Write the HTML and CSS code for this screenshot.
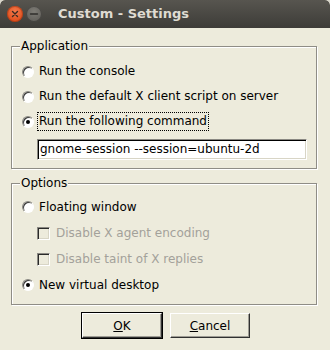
FILE: index.html
```html
<!DOCTYPE html>
<html lang="en">
<head>
  <meta charset="UTF-8" />
  <title>Custom - Settings</title>
  <link rel="stylesheet" href="styles.css">
</head>
<body>
  <div class="titlebar">
    <span class="wbtn close">
      <svg width="16" height="16" viewBox="0 0 16 16"><path d="M5.5 5.5 L10.5 10.5 M10.5 5.5 L5.5 10.5" stroke="#3a2a22" stroke-width="1.4" stroke-linecap="round"/></svg>
    </span>
    <span class="wbtn minimize">
      <svg width="16" height="16" viewBox="0 0 16 16"><path d="M4.5 8 L11.5 8" stroke="#2f2e2b" stroke-width="1.4" stroke-linecap="round"/></svg>
    </span>
    <span class="title">Custom - Settings</span>
  </div>

  <div class="content">
    <fieldset class="group app">
      <legend>Application</legend>
      <div class="row"><span class="radio"></span><span class="label">Run the console</span></div>
      <div class="row"><span class="radio"></span><span class="label">Run the default X client script on server</span></div>
      <div class="row"><span class="radio checked"></span><span class="label focus">Run the following command</span></div>
      <div class="entry">gnome-session --session=ubuntu-2d</div>
    </fieldset>

    <fieldset class="group options">
      <legend>Options</legend>
      <div class="row"><span class="radio"></span><span class="label">Floating window</span></div>
      <div class="row sub"><span class="check"></span><span class="label disabled">Disable X agent encoding</span></div>
      <div class="row sub"><span class="check"></span><span class="label disabled">Disable taint of X replies</span></div>
      <div class="row"><span class="radio checked"></span><span class="label">New virtual desktop</span></div>
    </fieldset>

    <div class="actions">
      <span class="default-ring"><button class="btn"><u>O</u>K</button></span>
      <button class="btn cancel"><u>C</u>ancel</button>
    </div>
  </div>
</body>
</html>
```

FILE: styles.css
```css
* {
  box-sizing: border-box;
}

html {
  background: #d9d7cc;
}

body {
  margin: 0;
  width: 330px;
  height: 350px;
  background: #edebdc;
  font-family: "DejaVu Sans", sans-serif;
  font-size: 12px;
  color: #000;
  border-radius: 5px 5px 0 0;
  overflow: hidden;
}

.titlebar {
  height: 28px;
  display: flex;
  align-items: center;
  padding-left: 7px;
  background: linear-gradient(#57554f, #3d3c38);
  border-radius: 5px 5px 0 0;
}

.wbtn {
  width: 16px;
  height: 16px;
  border-radius: 50%;
  display: flex;
}

.close {
  background: radial-gradient(circle at 50% 35%, #f47a4c, #e0511f 70%, #c8441a);
  box-shadow: inset 0 0 0 1px rgba(120, 30, 0, 0.35);
}

.minimize {
  margin-left: 3px;
  background: radial-gradient(circle at 50% 35%, #7e7c76, #64625d 70%, #55534e);
  box-shadow: inset 0 0 0 1px rgba(0, 0, 0, 0.3);
}

.title {
  margin-left: 16px;
  font-weight: bold;
  font-size: 13px;
  color: #dfdbd2;
  line-height: 16px;
}

.content {
  display: flex;
  flex-direction: column;
}

.group {
  margin: 0 13px 0 11px;
  padding: 5px 9px 8px 0;
  border: 1px solid #8f8d86;
  box-shadow: 1px 1px 0 #fff, inset 1px 1px 0 #fff;
  min-width: 0;
}

.app {
  margin-top: 11px;
}

.options {
  margin-top: 7px;
  padding-top: 3px;
  padding-bottom: 6px;
}

.group legend {
  margin-left: 8px;
  padding: 0 1px;
  line-height: 15px;
  background: #edebdc;
}

.row {
  height: 25px;
  display: flex;
  align-items: center;
  padding-left: 10px;
}

.options .row {
  height: 26px;
}

.row.sub {
  padding-left: 25px;
}

.radio {
  width: 12px;
  height: 12px;
  border-radius: 50%;
  border: 1px solid;
  border-color: #8a8882 #fff #fff #8a8882;
  box-shadow: inset 1px 1px 0 #3a3a3a;
  background: #fff;
  margin-right: 3px;
  display: flex;
  align-items: center;
  justify-content: center;
}

.radio.checked::after {
  content: "";
  width: 4px;
  height: 4px;
  border-radius: 50%;
  background: #000;
}

.check {
  width: 13px;
  height: 13px;
  border: 1px solid;
  border-color: #8a8882 #fff #fff #8a8882;
  box-shadow: inset 1px 1px 0 #2a2a2a, inset -1px -1px 0 #d8d5c6;
  margin-right: 4px;
}

.label {
  padding: 1px 1px;
  border: 1px dotted transparent;
  line-height: 15px;
}

.label.focus {
  border-color: #000;
}

.label.disabled {
  color: #a3a19a;
}

.entry {
  margin: 5px 0 0 25px;
  height: 21px;
  padding: 0 2px;
  border: 1px solid;
  border-color: #8a8882 #fff #fff #8a8882;
  box-shadow: inset 1px 1px 0 #000, inset -1px -1px 0 #d8d5c6;
  background: #fff;
  line-height: 19px;
  white-space: nowrap;
  overflow: hidden;
}

.actions {
  display: flex;
  justify-content: center;
  align-items: flex-start;
  gap: 7px;
  margin-top: 7px;
  padding-left: 1px;
}

.default-ring {
  display: flex;
  border: 1px solid #000;
}

.btn {
  width: 80px;
  height: 25px;
  padding: 0;
  font-family: "DejaVu Sans", sans-serif;
  font-size: 12px;
  color: #000;
  background: #edebdc;
  border: 1px solid;
  border-color: #fff #303030 #303030 #fff;
  box-shadow: inset -1px -1px 0 #9e9c94;
}

.btn.cancel {
  margin-top: 1px;
}
```
